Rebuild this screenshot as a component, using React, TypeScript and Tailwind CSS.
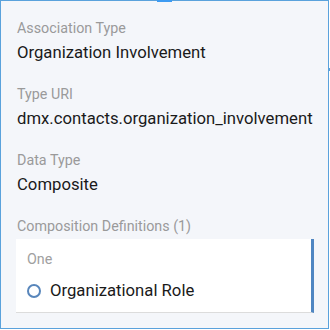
import React from "react";

export default function App() {
  return (
    <div className="w-[330px] h-[330px] bg-white relative" style={{ fontFamily: "Roboto, 'Noto Sans', sans-serif" }}>
      <div className="w-[329px] h-[329px] border border-[#5aa2dc] bg-[#f4f6fa] px-4 pt-[17px]">
        <div className="flex flex-col">
          <div className="text-[14.3px] leading-[20px] text-[#9a9a9a]">Association Type</div>
          <div className="text-[16.7px] leading-[22px] text-[#1a1a1a] mt-[4px]">Organization Involvement</div>
          <div className="text-[14.3px] leading-[20px] text-[#9a9a9a] mt-[20px]">Type URI</div>
          <div className="text-[16.7px] leading-[22px] text-[#1a1a1a] mt-[4px] whitespace-nowrap">dmx.contacts.organization_involvement</div>
          <div className="text-[14.3px] leading-[20px] text-[#9a9a9a] mt-[20px]">Data Type</div>
          <div className="text-[16.7px] leading-[22px] text-[#1a1a1a] mt-[4px]">Composite</div>
          <div className="text-[14.3px] leading-[20px] text-[#9a9a9a] mt-[20px]">Composition Definitions (1)</div>
          <div className="mt-[3px] -ml-px w-[298px] h-[74px] bg-white border-b border-[#dcdcdc] border-r-[3px] border-r-[#4f86c2] pl-[11px] pt-[10px]">
            <div className="text-[14.3px] leading-[20px] text-[#a0a0a0]">One</div>
            <div className="flex items-center mt-[11px]">
              <span className="w-[14px] h-[14px] rounded-full border-[2.5px] border-[#5886bb] mr-[9px]"></span>
              <span className="text-[16.7px] leading-[22px] text-[#1a1a1a]">Organizational Role</span>
            </div>
          </div>
        </div>
      </div>
      <div className="absolute left-[157px] top-0 w-[15px] h-[2px] bg-[#3d9bf2]"></div>
      <div className="absolute left-[328px] top-[68px] w-[2px] h-[3px] bg-[#5aa2dc]"></div>
    </div>
  );
}
